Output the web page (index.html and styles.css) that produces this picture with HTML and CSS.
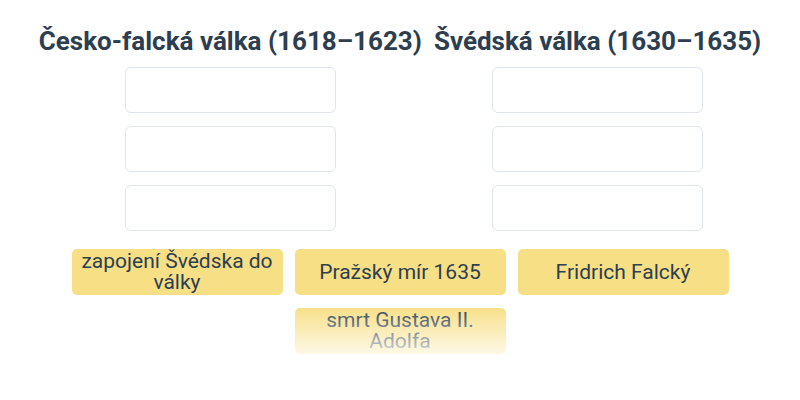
FILE: index.html
```html
<!DOCTYPE html>
<html lang="cs">
<head>
<meta charset="utf-8">
<link rel="stylesheet" href="styles.css">
</head>
<body>
<div class="board">
  <div class="columns">
    <div class="column">
      <h2 class="title">Česko-falcká válka (1618–1623)</h2>
      <div class="slot"></div>
      <div class="slot"></div>
      <div class="slot"></div>
    </div>
    <div class="column">
      <h2 class="title">Švédská válka (1630–1635)</h2>
      <div class="slot"></div>
      <div class="slot"></div>
      <div class="slot"></div>
    </div>
  </div>
  <div class="cards">
    <div class="card">zapojení Švédska do války</div>
    <div class="card">Pražský mír 1635</div>
    <div class="card">Fridrich Falcký</div>
    <div class="card">smrt Gustava II. Adolfa</div>
  </div>
  <div class="fade"></div>
</div>
</body>
</html>
```
FILE: styles.css
```css
html, body {
  margin: 0;
  padding: 0;
  background: #ffffff;
}
body {
  font-family: Roboto, "Liberation Sans", sans-serif;
  color: #2c3e50;
  width: 800px;
  height: 400px;
  overflow: hidden;
}
.board {
  position: relative;
  padding-top: 26px;
  height: 374px;
}
.columns {
  display: flex;
  justify-content: center;
  gap: 12px;
}
.column {
  display: flex;
  flex-direction: column;
  align-items: center;
  gap: 13px;
}
.title {
  margin: 0 0 -3px 0;
  font-size: 26px;
  font-weight: 700;
  line-height: 31px;
  color: #2c3e50;
  white-space: nowrap;
}
.slot {
  width: 209px;
  height: 44px;
  border: 1px solid #dfe5ea;
  border-radius: 6px;
  background: #fff;
}
.cards {
  margin: 18px auto 0;
  width: 660px;
  display: flex;
  flex-wrap: wrap;
  justify-content: center;
  gap: 13px 12px;
}
.card {
  width: 211px;
  height: 46px;
  box-sizing: border-box;
  padding: 0 6px;
  background: #f7df86;
  border-radius: 5px;
  display: flex;
  align-items: center;
  justify-content: center;
  text-align: center;
  font-size: 21px;
  line-height: 21px;
  color: #2c3e50;
}
.fade {
  position: absolute;
  left: 0;
  right: 0;
  top: 306px;
  height: 64px;
  background: linear-gradient(to bottom, rgba(255,255,255,0) 0%, rgba(255,255,255,0.8) 75%, #ffffff 100%);
  pointer-events: none;
}
```
